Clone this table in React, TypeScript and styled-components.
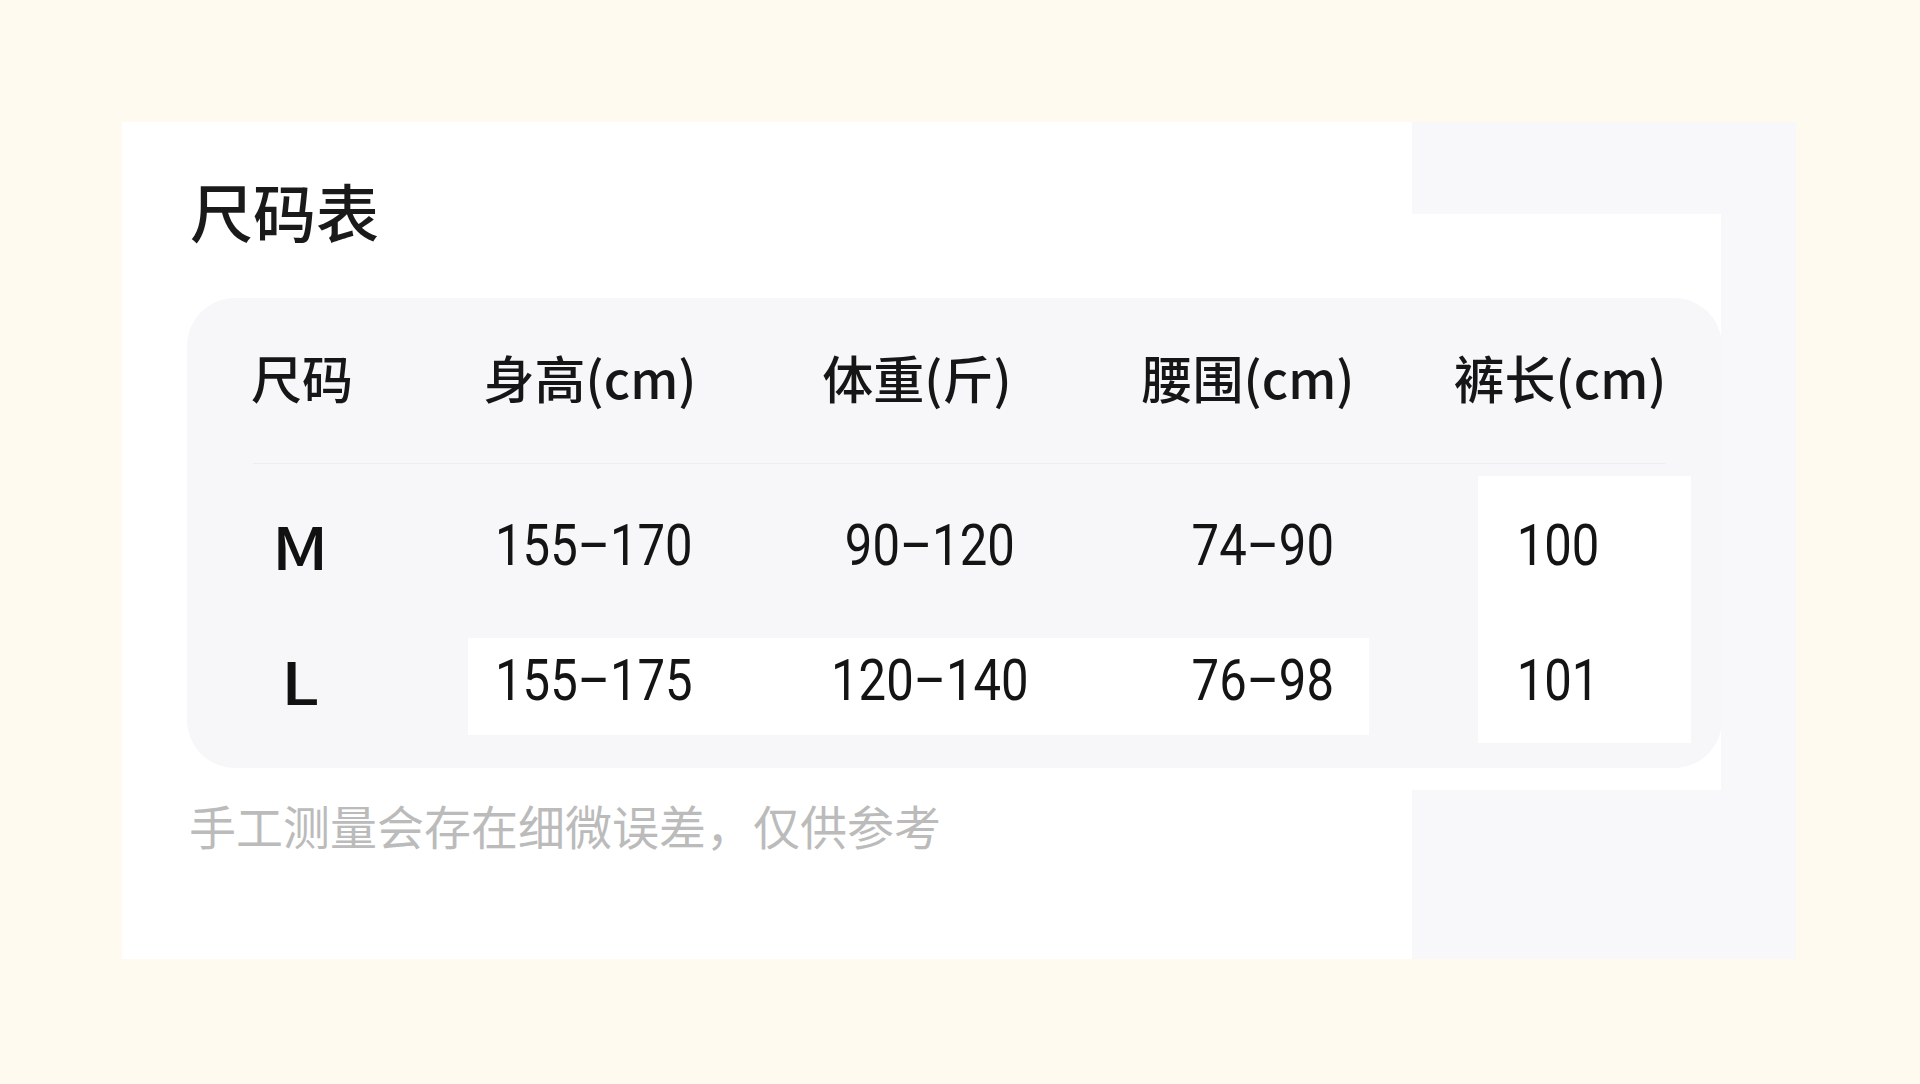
import React from "react";
import styled, { createGlobalStyle } from "styled-components";

const GlobalStyle = createGlobalStyle`
  html, body {
    margin: 0;
    padding: 0;
    background: #fffaf0;
  }
  body {
    font-family: "Noto Sans CJK SC", "Noto Sans", sans-serif;
    color: #1a1a1a;
  }
`;

const Page = styled.div`
  min-height: 1084px;
  padding: 122px 0 0 122px;
  box-sizing: border-box;
`;

const Card = styled.div`
  width: 1674px;
  height: 837px;
  box-sizing: border-box;
  padding: 48px 74px 0 65px;
  background:
    linear-gradient(#f8f8fa, #f8f8fa) right top / 384px 92px no-repeat,
    linear-gradient(#f8f8fa, #f8f8fa) right bottom / 384px 169px no-repeat,
    linear-gradient(#f8f8fa, #f8f8fa) right top / 75px 100% no-repeat,
    #ffffff;
`;

const Title = styled.h1`
  margin: 0 0 48px 3px;
  font-size: 63px;
  line-height: 80px;
  font-weight: 500;
  color: #1a1a1a;
`;

const Table = styled.div`
  display: grid;
  grid-template-columns: 200px 388px 284px 382px 208px;
  grid-template-rows: 165px 1px 162px 108px;
  padding: 0 60px 34px 13px;
  background: #f7f7f9;
  border-radius: 48px;
`;

const HeadCell = styled.div<{ $col: number; $shift?: number }>`
  grid-row: 1;
  grid-column: ${(p) => p.$col};
  display: flex;
  align-items: center;
  justify-content: center;
  padding-bottom: 7px;
  margin-left: ${(p) => p.$shift ?? 0}px;
  font-size: 51px;
  font-weight: 500;
  color: #161616;
  white-space: nowrap;
`;

const Divider = styled.div`
  grid-row: 2;
  grid-column: 1 / -1;
  margin: 0 -3px 0 53px;
  background: #ededf0;
`;

const Patch = styled.div<{ $rows: string; $cols: string; $inset: string }>`
  grid-row: ${(p) => p.$rows};
  grid-column: ${(p) => p.$cols};
  margin: ${(p) => p.$inset};
  background: #ffffff;
`;

const SizeCell = styled.div<{ $row: number }>`
  grid-row: ${(p) => p.$row};
  grid-column: 1;
  display: flex;
  align-items: center;
  justify-content: center;
  font-size: 58px;
  font-weight: 500;
  color: #111;

  & span {
    display: inline-block;
    transform: scaleX(1.18);
  }
`;

const ValueCell = styled.div<{ $row: number; $col: number }>`
  grid-row: ${(p) => p.$row};
  grid-column: ${(p) => p.$col};
  display: flex;
  align-items: center;
  justify-content: center;
  font-family: Roboto, "Liberation Sans", sans-serif;
  font-size: 57px;
  font-weight: 400;
  color: #141414;
  white-space: nowrap;

  & span {
    display: inline-block;
    transform: scaleX(0.86);
  }
`;

const Note = styled.p`
  margin: 27px 0 0 2px;
  font-size: 47px;
  line-height: 60px;
  color: #bbbbbb;
`;

const headers = [
  { label: "尺码", shift: 4 },
  { label: "身高(cm)", shift: -8 },
  { label: "体重(斤)", shift: -26 },
  { label: "腰围(cm)", shift: -30 },
  { label: "裤长(cm)", shift: 4 },
];

const rows = [
  { size: "M", values: ["155–170", "90–120", "74–90", "100"] },
  { size: "L", values: ["155–175", "120–140", "76–98", "101"] },
];

export default function App() {
  return (
    <>
      <GlobalStyle />
      <Page>
        <Card>
          <Title>尺码表</Title>
          <Table>
            {headers.map((h, i) => (
              <HeadCell key={h.label} $col={i + 1} $shift={h.shift}>
                {h.label}
              </HeadCell>
            ))}
            <Divider />
            <Patch $rows="4" $cols="2 / 5" $inset="12px 85px -1px 68px" />
            <Patch $rows="3 / 5" $cols="5" $inset="12px -29px -9px 24px" />
            {rows.map((r, ri) => (
              <React.Fragment key={r.size}>
                <SizeCell $row={ri + 3}>
                  <span>{r.size}</span>
                </SizeCell>
                {r.values.map((v, ci) => (
                  <ValueCell key={ci} $row={ri + 3} $col={ci + 2}>
                    <span>{v}</span>
                  </ValueCell>
                ))}
              </React.Fragment>
            ))}
          </Table>
          <Note>手工测量会存在细微误差，仅供参考</Note>
        </Card>
      </Page>
    </>
  );
}
